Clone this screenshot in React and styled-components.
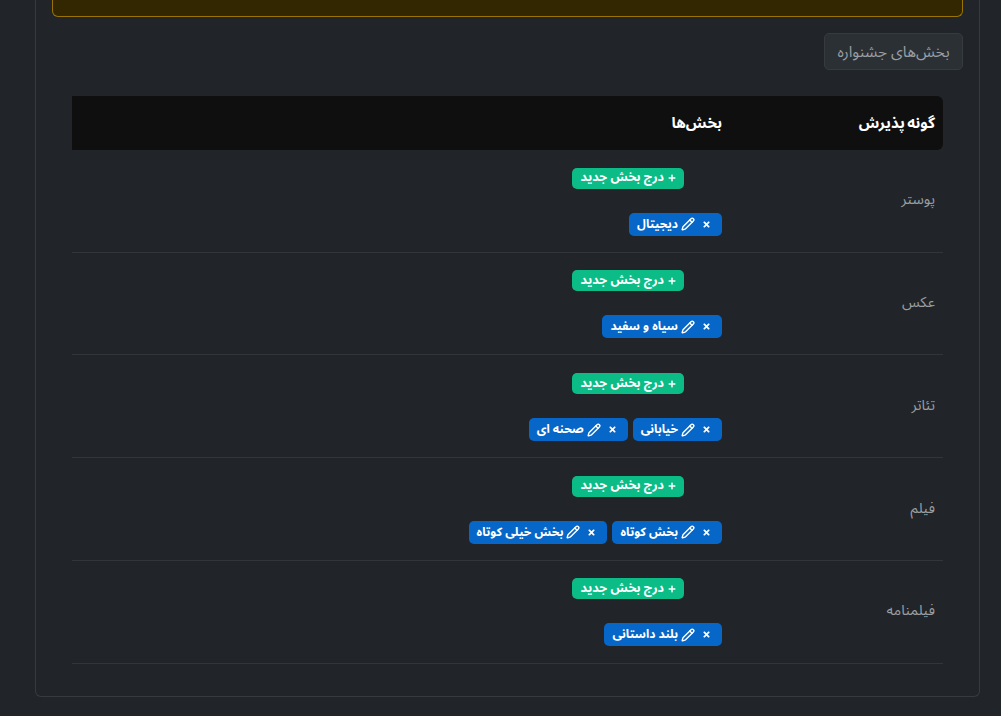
import React from "react";
import styled, { createGlobalStyle } from "styled-components";
import { Pencil } from "lucide-react";
import { FaPlus, FaTimes } from "react-icons/fa";

const Global = createGlobalStyle`
  html, body {
    margin: 0;
    padding: 0;
    height: 716px;
    overflow: hidden;
    background: #212529;
  }
  body {
    font-family: "Noto Sans Arabic", "Noto Sans", "Noto Sans CJK SC", sans-serif;
  }
`;

const Page = styled.div`
  padding: 0 21px 0 35px;
  height: 716px;
  box-sizing: border-box;
`;

const Card = styled.div`
  height: 697px;
  box-sizing: border-box;
  border: 1px solid #373b3e;
  border-top: none;
  border-radius: 0 0 6px 6px;
  padding: 0 16px;
`;

const Alert = styled.div`
  height: 17px;
  box-sizing: border-box;
  background: #332701;
  border: 1px solid #997404;
  border-top: none;
  border-radius: 0 0 6px 6px;
`;

const ButtonRow = styled.div`
  display: flex;
  padding-top: 16px;
  margin-bottom: 26px;
`;

const TabButton = styled.button`
  height: 37px;
  width: 139px;
  padding: 0;
  box-sizing: border-box;
  background: #2b3035;
  border: 1px solid #373b3e;
  border-radius: 5px;
  color: #9a9ea2;
  font-family: inherit;
  font-size: 15.4px;
`;

const Table = styled.div`
  margin: 0 20px;
`;

const HeadRow = styled.div`
  display: grid;
  grid-template-columns: 213px 1fr;
  height: 54px;
  align-items: center;
  background: #0f0f0f;
  border-radius: 0 6px 6px 0;
  color: #fff;
  font-weight: 700;
  font-size: 15px;
`;

const HeadCell = styled.div`
  padding-right: 8px;
  word-spacing: -1.5px;
`;

const Row = styled.div`
  display: grid;
  grid-template-columns: 213px 1fr;
  height: 102.72px;
  box-sizing: border-box;
  border-bottom: 1px solid #32363a;
`;

const Label = styled.div`
  align-self: center;
  padding: 0 8px 1.8px 0;
  color: #9a9ea2;
  font-size: 14.5px;
`;

const Sections = styled.div`
  padding: 17.6px 8px 0;
`;

const AddBadge = styled.div`
  display: flex;
  align-items: center;
  width: 112px;
  height: 21px;
  margin-right: 38px;
  box-sizing: border-box;
  padding: 0 8px 2px 0;
  gap: 4px;
  background: #0cbc87;
  border-radius: 5px;
  color: #fff;
  font-size: 12.5px;
  font-weight: 700;
  white-space: nowrap;
`;

const PlusIcon = styled(FaPlus)`
  width: 8px;
  height: 8px;
  margin-top: 2px;
  flex-shrink: 0;
`;

const Badges = styled.div`
  display: flex;
  gap: 5px;
  margin-top: 24px;
`;

const Badge = styled.div`
  display: flex;
  align-items: center;
  height: 23px;
  box-sizing: border-box;
  padding: 0 8px;
  background: #0767c8;
  border-radius: 5px;
  color: #fff;
  font-size: 12px;
  font-weight: 700;
  white-space: nowrap;
`;

const RemoveIcon = styled(FaTimes)`
  width: 9px;
  height: 9px;
  margin-right: 3px;
  margin-left: 7px;
  flex-shrink: 0;
`;

const EditIcon = styled(Pencil)`
  width: 14px;
  height: 14px;
  margin-left: 3px;
  flex-shrink: 0;
`;

const rows = [
  { name: "پوستر", items: ["دیجیتال"] },
  { name: "عکس", items: ["سیاه و سفید"] },
  { name: "تئاتر", items: ["خیابانی", "صحنه ای"] },
  { name: "فیلم", items: ["بخش کوتاه", "بخش خیلی کوتاه"] },
  { name: "فیلمنامه", items: ["بلند داستانی"] },
];

const App = () => {
  return (
    <Page dir="rtl">
      <Global />
      <Card>
        <Alert />
        <ButtonRow>
          <TabButton>بخش‌های جشنواره</TabButton>
        </ButtonRow>
        <Table>
          <HeadRow>
            <HeadCell>گونه پذیرش</HeadCell>
            <HeadCell>بخش‌ها</HeadCell>
          </HeadRow>
          {rows.map((row) => (
            <Row key={row.name}>
              <Label>{row.name}</Label>
              <Sections>
                <AddBadge>
                  <PlusIcon />
                  درج بخش جدید
                </AddBadge>
                <Badges>
                  {row.items.map((item) => (
                    <Badge key={item}>
                      <RemoveIcon />
                      <EditIcon strokeWidth={2.4} />
                      {item}
                    </Badge>
                  ))}
                </Badges>
              </Sections>
            </Row>
          ))}
        </Table>
      </Card>
    </Page>
  );
};

export default App;
